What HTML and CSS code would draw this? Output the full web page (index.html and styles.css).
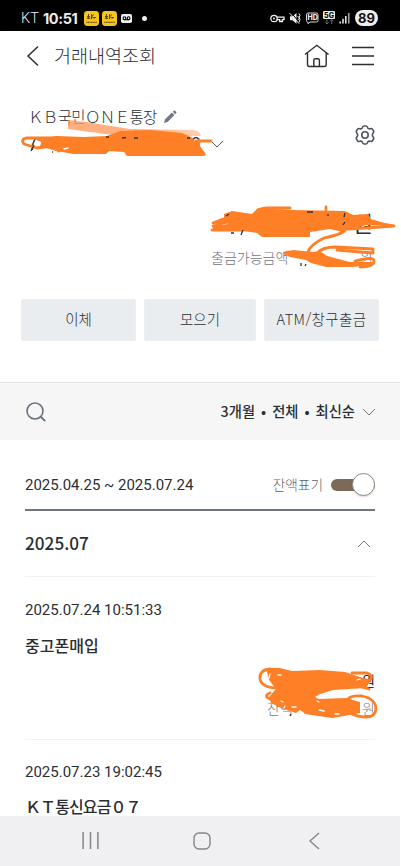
FILE: index.html
```html
<!DOCTYPE html>
<html lang="ko">
<head>
<meta charset="utf-8">
<meta name="viewport" content="width=device-width, initial-scale=1">
<title>거래내역조회</title>
<link rel="stylesheet" href="styles.css">
</head>
<body>
<div class="phone">
  <header class="status">
    <span class="carrier">KT</span>
    <span class="clock">10:51</span>
    <svg class="app-badge" viewBox="0 0 15 15"><rect width="15" height="15" rx="3.4" fill="#f8c51c"/><path d="M3 5.5h3M4.5 3v5M3 8l1.5-2L6 8M7.5 3.2v5M7.5 5.5l2.5-2M7.5 5.5l3 2M9.5 6.5h2.5" stroke="#554618" stroke-width="1" fill="none"/><path d="M2.3 11.4h10.5" stroke="#6b561b" stroke-width="1.2" stroke-dasharray="1.2 .4"/></svg>
    <svg class="app-badge" viewBox="0 0 15 15"><rect width="15" height="15" rx="3.4" fill="#f8c51c"/><path d="M3 5.5h3M4.5 3v5M3 8l1.5-2L6 8M7.5 3.2v5M7.5 5.5l2.5-2M7.5 5.5l3 2M9.5 6.5h2.5" stroke="#554618" stroke-width="1" fill="none"/><path d="M2.3 11.4h10.5" stroke="#6b561b" stroke-width="1.2" stroke-dasharray="1.2 .4"/></svg>
    <svg class="voicemail" viewBox="0 0 11 9"><rect width="11" height="9" rx="1.8" fill="#eee"/><g fill="none" stroke="#000" stroke-width="1.1"><circle cx="3.4" cy="4.2" r="1.4"/><circle cx="7.6" cy="4.2" r="1.4"/><path d="M3.4 5.7h4.2"/></g></svg>
    <i class="more-dot"></i>
    <svg class="signals" viewBox="0 0 82 18">
      <g fill="none" stroke="#eee" stroke-width="1.3"><circle cx="4" cy="9.5" r="3.2"/><path d="M7 8.2h7v2.5h-1.6v1.8h-2.7v-1.8H7"/></g><circle cx="4" cy="9.5" r="1" fill="#eee"/>
      <path d="M20 7.2h2.5l4-3.2v10.7l-4-3.4H20z" fill="#eee"/><path d="M20.800 3.500l9.500 10.700" stroke="#000" stroke-width="1"/><path d="M19.5 4l9.7 10.7M27.5 7l2 2-1.7 2M29 4.5l1 2-1 2 1 2-1 3" stroke="#eee" stroke-width="1" fill="none"/>
      <path d="M38 4h8.4a1.6 1.6 0 0 1 1.6 1.6v5.8a1.6 1.6 0 0 1-1.6 1.6H40l-2 1.7-.3-1.7a1.5 1.5 0 0 1-1.2-1.6V5.6A1.6 1.6 0 0 1 38 4z" fill="none" stroke="#ddd"/><text class="tag" x="37.600" y="11.3" fill="#eee">HD</text>
      <rect x="53" y="2" width="12" height="8" rx="1.2" fill="#eee"/><text class="tag" x="54.1" y="8.7">5G</text><path d="M57 10.5V15M55.2 13.2L57 15l1.8-1.8M61.7 15v-4.5M60 12.2l1.7-1.7 1.8 1.7" fill="none" stroke="#666"/>
      <path d="M70.2 12.5v2M73 9.8v4.7M75.8 7v7.5" stroke="#eee" stroke-width="1.5"/><path d="M78.8 4v10.5" stroke="#aaa" stroke-width="1.5"/>
    </svg>
    <span class="battery">89</span>
  </header>

  <nav class="topbar">
    <svg class="back" viewBox="0 0 14 22"><path d="M12 1.5L2 11l10 9.5" fill="none" stroke="#2b2e33" stroke-width="1.5"/></svg>
    <h1 class="title">거래내역조회</h1>
    <svg class="home" viewBox="0 0 26 24"><path d="M1 10.5L12.8 1.3 24.6 10.5M3.5 8.7v11.8q0 2 2 2h14.7q2 0 2-2V8.7M9.8 22.3v-6q0-1.6 1.6-1.6h2.4q1.6 0 1.6 1.6v6" fill="none" stroke="#2b2e33" stroke-width="1.4"/></svg>
    <svg class="menu" viewBox="0 0 22 20"><path d="M0 1.5h22M0 10h22M0 18.5h22" stroke="#2b2e33" stroke-width="1.4"/></svg>
  </nav>

  <section class="account">
    <div class="account-info">
      <div class="account-name"><span class="name-text">&#xFF2B;&#xFF22;국민&#xFF2F;&#xFF2E;&#xFF25;통장</span>
        <svg class="pencil" viewBox="0 0 14 14"><path d="M1 13l.9-3.5 7-7 2.6 2.6-7 7zM9.8 1.8l1-1q.8-.6 1.6.2l.7.7q.8.8 0 1.6l-1 1z" fill="#6f7986"/></svg>
      </div>
      <div class="account-number"><span>7</span><span class="last-digit">9</span>
        <svg class="chevron" viewBox="0 0 14 8"><path d="M1 1l6 6 6-6" fill="none" stroke="#555" stroke-width="1"/></svg>
      </div>
    </div>
    <svg class="gear" viewBox="0 0 20 20"><path d="M7.300 3Q7.600 1 9 1h2q1.400 0 1.700 2 1 1.200 2.600.7 1.600-.5 2.300.7l.9 1.600q.7 1.200-.7 2.400-.8 1.600 0 3.200 1.400 1.200.7 2.400l-.9 1.600q-.7 1.200-2.300.7-1.600-.5-2.600.7-.3 2-1.700 2H9q-1.400 0-1.700-2-1-1.200-2.600-.7-1.600.5-2.300-.7L1.500 14q-.7-1.200.7-2.400.8-1.600 0-3.200Q.8 7.200 1.500 6l.9-1.600q.7-1.200 2.300-.7 1.600.5 2.600-.7z" fill="none" stroke="#50565f" stroke-width="1.600"/><circle cx="10" cy="10" r="3.200" fill="none" stroke="#50565f" stroke-width="1.600"/></svg>
  </section>

  <section class="balance">
    <div class="amount">원</div>
    <div class="available"><span>출금가능금액</span><span>원</span></div>
  </section>

  <div class="actions">
    <button class="action">이체</button>
    <button class="action">모으기</button>
    <button class="action action-wide">ATM/창구출금</button>
  </div>

  <section class="filter">
    <svg class="search" viewBox="0 0 20 20"><circle cx="9" cy="9" r="8" fill="none" stroke="#6b727c" stroke-width="1.600"/><path d="M14.500 14.500l4.700 4.700" stroke="#6b727c" stroke-width="1.900"/></svg>
    <span class="filter-text">3개월 • 전체 • 최신순</span>
    <svg class="chevron" viewBox="0 0 14 8"><path d="M1 1l6 6 6-6" fill="none" stroke="#777" stroke-width="1"/></svg>
  </section>

  <main class="history">
    <div class="period">
      <span class="date">2025.04.25 ~ 2025.07.24</span>
      <span class="toggle-label">잔액표기</span>
      <span class="toggle"><i class="knob"></i></span>
    </div>
    <div class="month">
      <h2 class="month-title">2025.07</h2>
      <svg class="chevron" viewBox="0 0 14 8"><path d="M1 7l6-6 6 6" fill="none" stroke="#777" stroke-width="1"/></svg>
    </div>
    <article class="entry">
      <div class="date">2025.07.24 10:51:33</div>
      <div class="payee">중고폰매입</div>
      <div class="entry-amount">원</div>
      <div class="entry-balance"><span>잔액</span><span>원</span></div>
    </article>
    <article class="entry entry-last">
      <div class="date">2025.07.23 19:02:45</div>
      <div class="payee payee-wide">&#xFF2B;&#xFF34;통신요금&#xFF10;&#xFF17;</div>
    </article>
  </main>

  <footer class="system-nav">
    <svg viewBox="0 0 16 17"><path d="M1 0v16M8 0v16M15 0v16" stroke="#858589" stroke-width="1.400"/></svg>
    <svg viewBox="0 0 18 18"><rect x="1" y="1" width="16" height="16" rx="5" fill="none" stroke="#858589" stroke-width="1.400"/></svg>
    <svg viewBox="0 0 11 18"><path d="M10 1L1 9l9 8" fill="none" stroke="#858589" stroke-width="1.400"/></svg>
  </footer>

  <svg class="marker" viewBox="0 0 400 866">
    <defs><linearGradient id="fade" x1="68" y1="0" x2="202" y2="0" gradientUnits="userSpaceOnUse"><stop offset="0" stop-color="#ff9b60"/><stop offset=".5" stop-color="#ff9c62"/><stop offset="1" stop-color="#ffc5a3"/></linearGradient></defs>
    <path d="M68 120L86 122 130 129 194 130Q200 131 201 136H120L98 133 68 129z" fill="url(#fade)" opacity=".8"/>
    <g fill="#ff7f27">
      <path d="M43 139L56 136 84 137 107 136 120 131 150 130 182 133 193 138 195 142 200 138 200 146 205 153Q207 156 203 156H127L124 152 109 151 106 154 74 154 56 151 40 146z"/>
      <path d="M224 220L224 214 232 211 252 214 258 208 292 210 345 211 353 215 368 214 371 219 394 226 366 225 348 230 343 232 330 229 310 232 310 237 262 237 257 233 243 231 213 229 213 226 228 224z"/>
      <path d="M284 254L293 250 313 252 320 251 327 256 350 262 373 262 373 265 352 267 326 267 311 263 306 260 290 257z"/>
      <path d="M266 668L280 668 292 671 320 670 345 672 360 677 371 680 366 688 333 690 320 694 315 697 319 699 346 698 360 702 360 713 344 716 332 718 305 714 303 712 300 710 296 713 281 708 271 703 269 697 276 689 269 680z"/>
    </g>
    <g fill="none" stroke="#ff7f27" stroke-width="2.800" stroke-linecap="round" stroke-linejoin="round">
      <path d="M60 138L27 138Q20 139 24 144L37 148 60 145M36 138L59 151M196 141H211"/>
      <path d="M257 211Q261 207 272 208H290M326 210V207M228 220L213 223 223 219M213 226L228 222M212 230H243M345 230Q343 234 324 238 310 245 308 252M352 216L362 221 394 226 365 228 348 229"/>
      <path d="M317 253Q323 247 335 247L373 249V253L337 250M355 261Q374 256 374 261 374 267 360 267M285 253Q289 251 300 253"/>
      <path d="M270 669Q259 670 260 679 262 688 278 688M352 673L367 673Q373 675 371 679L362 687 369 689M270 693Q263 696 270 699M348 699Q351 695 362 696 376 699 376 709 375 718 364 717 352 716 344 709"/>
    </g>
    <g stroke="#fff" stroke-width="1.300" stroke-linecap="round">
      <path d="M35 143L40 142M64 149L68 148M278 675H281M317 701L319 702M319 710L324 711M281 701L283 702M292 707H296M357 680L360 679M270 674L269 678M335 714H339M284 708L285 706"/>
    </g>
    <g stroke="#333" stroke-width="1.300"><path d="M31 151L34 145M52 152H53M106 137H109M122 138L126 137.500M134 138H138M187 138H190M226 216L229 214M231 233H234M241 235L243 230M307 212H313M328 216V214M345 213L344 217M343 225L345 222M301 263V266M306 264L305 266M290 716L291 714"/></g>
  </svg>
</div>
</body>
</html>
```
FILE: styles.css
```css
* { box-sizing: border-box; }
body {
  margin: 0;
  background: #fff;
  color: #2b2e33;
  font-family: "Noto Sans CJK KR", sans-serif;
  overflow: hidden;
}
svg { display: block; flex: none; }
h1, h2 { margin: 0; }
.phone {
  position: relative;
  width: 400px;
  height: 866px;
  display: flex;
  flex-direction: column;
  overflow: hidden;
}
.status {
  height: 31px;
  flex: none;
  display: flex;
  align-items: center;
  padding: 5px 22px 0 21px;
  background: #000;
  color: #eee;
}
.carrier { width: 22px; font: 300 14.500px Roboto, sans-serif; }
.clock { width: 41px; font: 700 14.500px Inter, sans-serif; letter-spacing: -.4px; white-space: nowrap; }
.app-badge { width: 15px; height: 15px; margin-right: 3px; }
.voicemail { width: 11px; height: 9px; margin-left: 1px; }
.more-dot { width: 5px; height: 5px; border-radius: 50%; background: #eee; margin-left: 10px; }
.signals { width: 82px; height: 18px; margin-left: auto; margin-right: 3px; }
.tag { font: 800 7px Inter, sans-serif; }
.battery {
  width: 23px;
  height: 16px;
  border-radius: 8px;
  background: #eee;
  color: #111;
  font: 700 13px/16px Inter, sans-serif;
  text-align: center;
}
.topbar {
  height: 50px;
  flex: none;
  display: flex;
  align-items: center;
  padding: 0 26px;
}
.back { width: 14px; height: 22px; }
.title { margin: -2px 0 0 14px; font-size: 18.500px; font-weight: 300; line-height: 28px; white-space: nowrap; }
.home { width: 26px; height: 24px; margin-left: auto; }
.menu { width: 22px; height: 20px; margin-left: 22px; }
.account {
  height: 88px;
  flex: none;
  display: flex;
  justify-content: space-between;
  padding: 23px 25px 0 28px;
}
.account-name { display: flex; align-items: center; height: 23px; }
.name-text { width: 129px; font-size: 15.500px; font-weight: 300; letter-spacing: -.65px; white-space: nowrap; }
.pencil { width: 14px; height: 14px; margin-left: 6px; margin-top: 2px; }
.account-number {
  display: flex;
  align-items: center;
  height: 30px;
  font-size: 17px;
  font-weight: 400;
}
.last-digit { margin-left: 154px; }
.chevron { width: 14px; height: 8px; }
.account-number .chevron { margin-left: 9px; margin-top: 3px; }
.gear { width: 20px; height: 20px; margin-top: 21px; }
.balance {
  height: 130px;
  flex: none;
  padding: 37px 27px 0 211px;
  text-align: right;
}
.amount { font-size: 22px; line-height: 32px; font-weight: 400; }
.available {
  display: flex;
  justify-content: space-between;
  margin-top: 6px;
  color: #6f747b;
  font-size: 14px;
  font-weight: 300;
  line-height: 26px;
}
.actions {
  height: 42px;
  flex: none;
  display: grid;
  grid-template-columns: 115px 112px 115px;
  gap: 8px;
  padding-left: 21px;
}
.action {
  border: 1px solid #edf0f3;
  border-radius: 2px;
  padding: 0 0 4px;
  background: #e9edf0;
  color: #2b2e33;
  font: 300 14.500px "Noto Sans CJK KR", sans-serif;
}
.action-wide { white-space: nowrap; letter-spacing: .4px; }
.filter {
  height: 58px;
  flex: none;
  margin-top: 41px;
  display: flex;
  align-items: center;
  padding: 0 24px 0 26px;
  border-top: 1px solid #e4e4e5;
  background: #f6f6f7;
}
.search { width: 20px; height: 20px; }
.filter-text { margin: -2px 7px 0 auto; font-size: 14.300px; font-weight: 500; line-height: 22px; word-spacing: 2px; white-space: nowrap; }
.history { flex: 1; min-height: 0; padding: 0 25px; overflow: hidden; }
.period {
  height: 71px;
  display: flex;
  align-items: center;
  padding-top: 20px;
  border-bottom: 2px solid #6e757d;
}
.date { font: 400 15px/20px Roboto, sans-serif; white-space: nowrap; }
.toggle-label { margin: -2px 0 0 auto; color: #5d6269; font-size: 13.700px; font-weight: 300; }
.toggle {
  width: 44px;
  height: 12px;
  margin-left: 8px;
  border-radius: 6px;
  background: #7c6a59;
  display: flex;
  align-items: center;
  justify-content: flex-end;
}
.knob {
  width: 23px;
  height: 23px;
  flex: none;
  border: 1px solid #94877a;
  border-radius: 50%;
  background: #fff;
  box-shadow: 0 1px 2px #0002;
}
.month {
  height: 66px;
  display: flex;
  align-items: center;
  justify-content: space-between;
  padding-right: 4px;
  border-bottom: 1px solid #f1f1f2;
}
.month-title { margin-top: -2px; font-size: 17.200px; font-weight: 500; line-height: 26px; }
.entry { height: 163px; padding-top: 23px; border-bottom: 1px solid #f1f1f2; }
.entry-last { padding-top: 22px; }
.payee { margin-top: 13px; font-size: 16px; font-weight: 500; line-height: 24px; white-space: nowrap; }
.payee-wide { letter-spacing: -.9px; margin-top: 12px; }
.entry-amount { margin-top: 12px; text-align: right; font-size: 14.500px; line-height: 24px; }
.entry-balance {
  display: flex;
  justify-content: space-between;
  padding-left: 242px;
  color: #777b81;
  font-size: 14px;
  font-weight: 300;
  line-height: 30px;
}
.system-nav {
  height: 50px;
  flex: none;
  display: flex;
  align-items: center;
  justify-content: space-between;
  padding: 0 80px 0 82px;
  background: #f0f0f2;
}
.system-nav svg { width: 17px; height: 18px; }
.system-nav svg:nth-child(2) { width: 18px; margin-right: 4px; }
.system-nav svg:last-child { width: 11px; }
.marker { position: absolute; inset: 0; width: 400px; height: 866px; pointer-events: none; }
```
